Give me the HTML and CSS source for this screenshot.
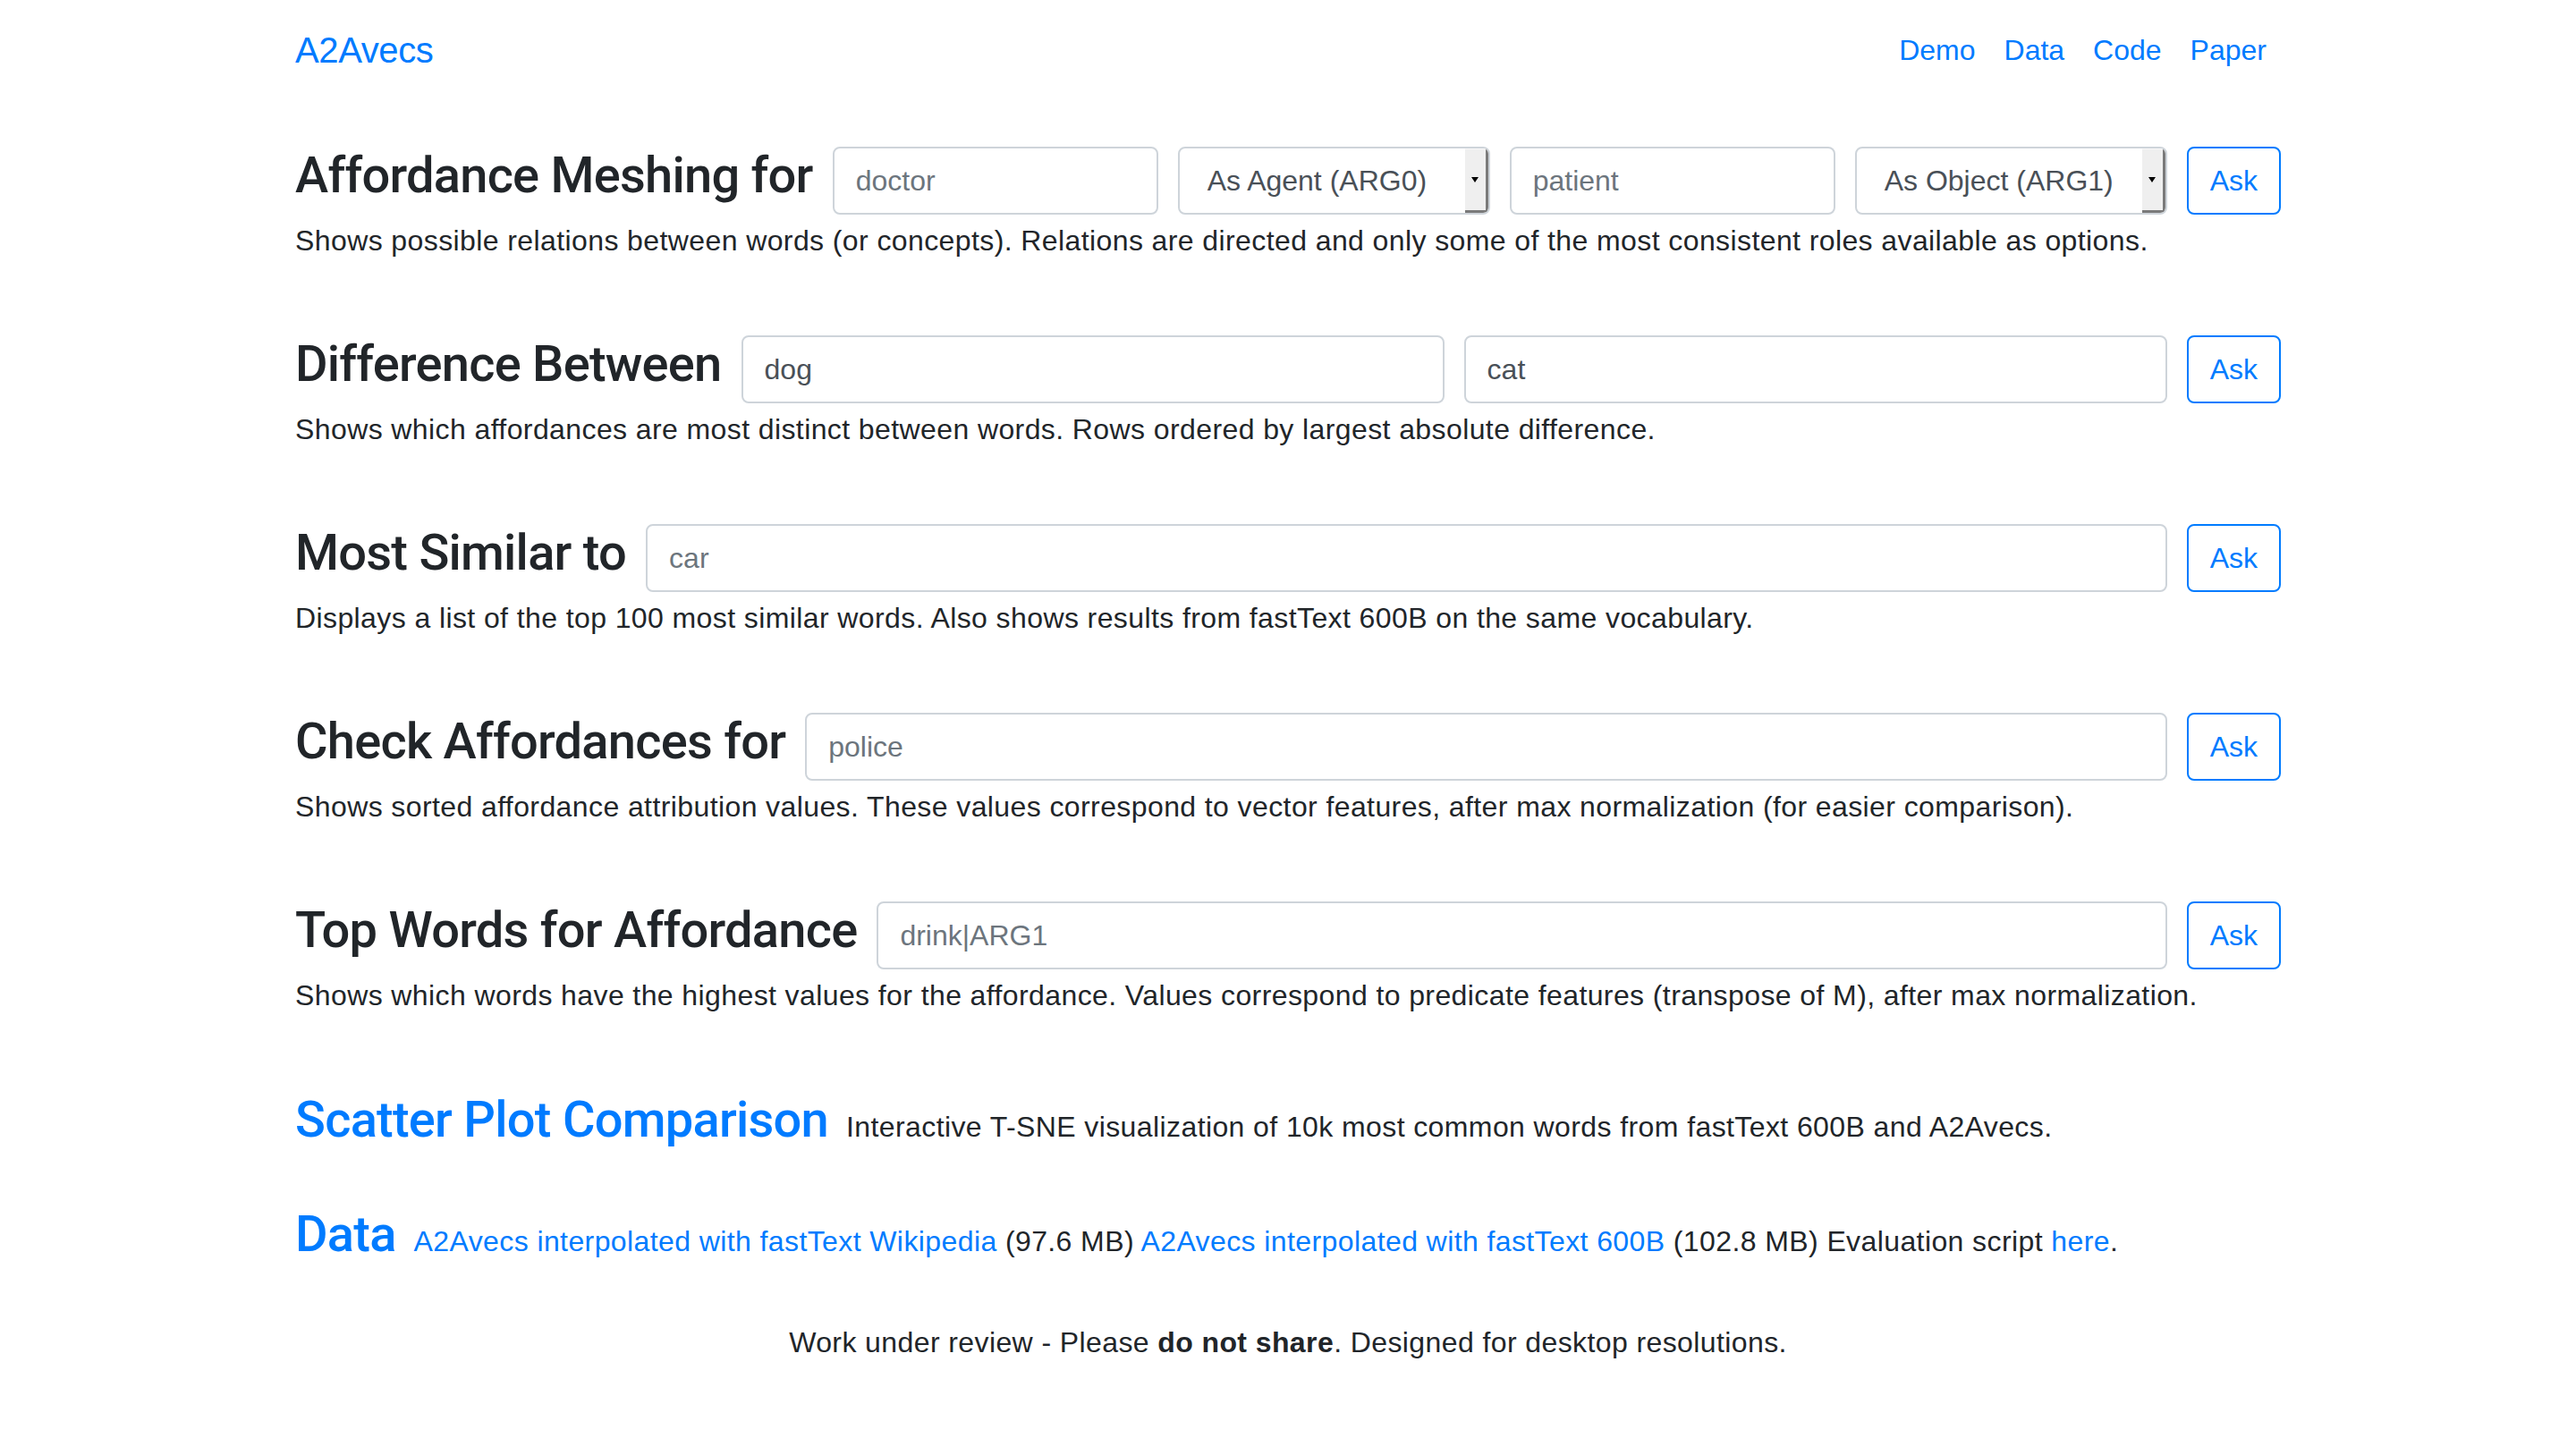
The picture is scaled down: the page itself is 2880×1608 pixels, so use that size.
FILE: index.html
```html
<!DOCTYPE html>
<html lang="en">
<head>
<meta charset="utf-8">
<title>A2Avecs</title>
<link rel="stylesheet" href="styles.css">
</head>
<body>
<div class="container">
  <nav class="navbar">
    <a class="brand" href="#">A2Avecs</a>
    <ul class="nav">
      <li><a href="#">Demo</a></li>
      <li><a href="#">Data</a></li>
      <li><a href="#">Code</a></li>
      <li><a href="#">Paper</a></li>
    </ul>
  </nav>

  <main class="main">
    <section class="query">
      <div class="query-row">
        <h3 class="title">Affordance Meshing for</h3>
        <input class="field" type="text" placeholder="doctor">
        <div class="select"><span class="select-text">As Agent (ARG0)</span><span class="select-arrow"><svg width="8" height="6" viewBox="0 0 8 6"><path d="M0 0H8L4 6Z" fill="#000"/></svg></span></div>
        <input class="field" type="text" placeholder="patient">
        <div class="select"><span class="select-text">As Object (ARG1)</span><span class="select-arrow"><svg width="8" height="6" viewBox="0 0 8 6"><path d="M0 0H8L4 6Z" fill="#000"/></svg></span></div>
        <button class="btn" type="button">Ask</button>
      </div>
      <p class="desc">Shows possible relations between words (or concepts). Relations are directed and only some of the most consistent roles available as options.</p>
    </section>

    <section class="query">
      <div class="query-row">
        <h3 class="title">Difference Between</h3>
        <input class="field" type="text" value="dog">
        <input class="field" type="text" value="cat">
        <button class="btn" type="button">Ask</button>
      </div>
      <p class="desc">Shows which affordances are most distinct between words. Rows ordered by largest absolute difference.</p>
    </section>

    <section class="query">
      <div class="query-row">
        <h3 class="title">Most Similar to</h3>
        <input class="field" type="text" placeholder="car">
        <button class="btn" type="button">Ask</button>
      </div>
      <p class="desc">Displays a list of the top 100 most similar words. Also shows results from fastText 600B on the same vocabulary.</p>
    </section>

    <section class="query">
      <div class="query-row">
        <h3 class="title">Check Affordances for</h3>
        <input class="field" type="text" placeholder="police">
        <button class="btn" type="button">Ask</button>
      </div>
      <p class="desc">Shows sorted affordance attribution values. These values correspond to vector features, after max normalization (for easier comparison).</p>
    </section>

    <section class="query">
      <div class="query-row">
        <h3 class="title">Top Words for Affordance</h3>
        <input class="field" type="text" placeholder="drink|ARG1">
        <button class="btn" type="button">Ask</button>
      </div>
      <p class="desc">Shows which words have the highest values for the affordance. Values correspond to predicate features (transpose of M), after max normalization.</p>
    </section>

    <div class="link-row scatter">
      <h3 class="title"><a href="#">Scatter Plot Comparison</a></h3>
      <span class="inline-text">Interactive T-SNE visualization of 10k most common words from fastText 600B and A2Avecs.</span>
    </div>

    <div class="link-row data">
      <h3 class="title"><a href="#">Data</a></h3>
      <span class="inline-text"><a href="#">A2Avecs interpolated with fastText Wikipedia</a> (97.6 MB) <a href="#">A2Avecs interpolated with fastText 600B</a> (102.8 MB) Evaluation script <a href="#">here</a>.</span>
    </div>
  </main>

  <footer class="footer">Work under review - Please <b>do not share</b>. Designed for desktop resolutions.</footer>
</div>
</body>
</html>
```

FILE: styles.css
```css
* { box-sizing: border-box; }

html, body {
  margin: 0;
  padding: 0;
  background: #fff;
}

body {
  font-family: "Liberation Sans", Arial, sans-serif;
  font-size: 32px;
  line-height: 1.5;
  color: #212529;
}

a {
  color: #007bff;
  text-decoration: none;
}

.container {
  width: 2220px;
  margin: 0 auto;
}

.navbar {
  height: 112px;
  display: flex;
  align-items: center;
  justify-content: space-between;
}

.brand {
  font-size: 40px;
  line-height: 60px;
  letter-spacing: -0.4px;
}

.nav {
  display: flex;
  list-style: none;
  margin: 0;
  padding: 0;
}

.nav a {
  display: block;
  padding: 0 16px;
  font-size: 32px;
  line-height: 48px;
}

.main {
  padding-top: 52px;
}

.query {
  margin-bottom: 82px;
}

.query-row {
  display: flex;
  align-items: center;
  gap: 22px;
  height: 76px;
}

.title {
  margin: 0;
  font-family: Roboto, "Liberation Sans", sans-serif;
  font-weight: 500;
  font-size: 56px;
  line-height: 1.2;
  letter-spacing: -0.75px;
  white-space: nowrap;
}

.query-row .title {
  margin-bottom: 10px;
}

.field {
  flex: 1 1 0;
  min-width: 0;
  height: 76px;
  padding: 12px 24px;
  border: 2px solid #ced4da;
  border-radius: 8px;
  font-family: "Liberation Sans", Arial, sans-serif;
  font-size: 32px;
  line-height: 48px;
  color: #495057;
  background: #fff;
  outline: none;
}

.field::placeholder {
  color: #6c757d;
  opacity: 1;
}

.select {
  flex: 0 0 349px;
  height: 76px;
  display: flex;
  border: 2px solid #ced4da;
  border-radius: 8px;
  overflow: hidden;
  background: #fff;
  color: #495057;
}

.select-text {
  flex: 1;
  padding-left: 31px;
  line-height: 72px;
  white-space: nowrap;
}

.select-arrow {
  flex: 0 0 26px;
  display: flex;
  align-items: center;
  justify-content: center;
  background: #efefef;
  border-right: 3px solid #7a7a7a;
  border-bottom: 3px solid #7a7a7a;
  border-top: 1px solid #f8f8f8;
}

.btn {
  flex: 0 0 auto;
  height: 76px;
  padding: 12px 24px;
  border: 2px solid #007bff;
  border-radius: 8px;
  background: #fff;
  color: #007bff;
  font-family: "Liberation Sans", Arial, sans-serif;
  font-size: 32px;
  line-height: 48px;
}

.desc {
  margin: 5px 0 0;
  line-height: 48px;
  letter-spacing: 0.4px;
}

.link-row {
  display: flex;
  align-items: baseline;
  gap: 20px;
}

.inline-text {
  letter-spacing: 0.4px;
}

.data {
  margin-top: 61px;
}

.footer {
  margin-top: 63px;
  text-align: center;
  line-height: 48px;
  letter-spacing: 0.4px;
}

.footer b {
  font-weight: 700;
}
```
